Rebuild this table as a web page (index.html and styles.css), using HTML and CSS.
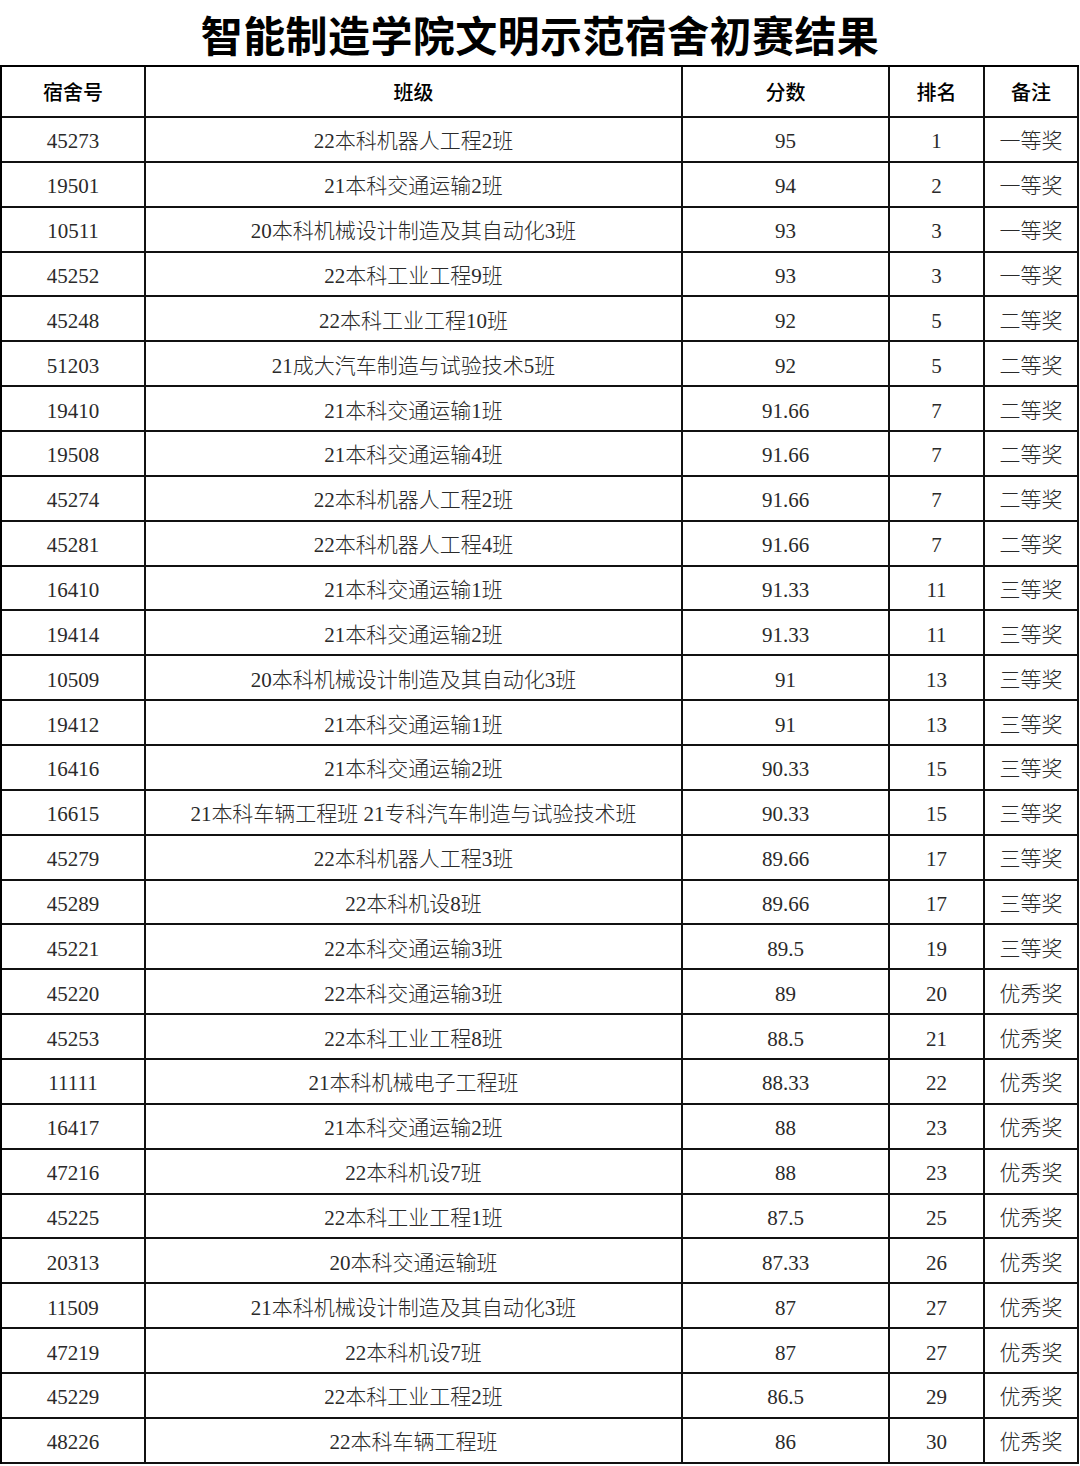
FILE: index.html
```html
<!DOCTYPE html>
<html lang="zh-CN">
<head>
<meta charset="utf-8">
<title>智能制造学院文明示范宿舍初赛结果</title>
<link rel="stylesheet" href="styles.css">
</head>
<body>
<h1 class="title">智能制造学院文明示范宿舍初赛结果</h1>
<div class="grid">
  <div class="cell head">宿舍号</div><div class="cell head">班级</div><div class="cell head">分数</div><div class="cell head">排名</div><div class="cell head">备注</div>
  <div class="cell">45273</div><div class="cell">22本科机器人工程2班</div><div class="cell">95</div><div class="cell">1</div><div class="cell">一等奖</div>
  <div class="cell">19501</div><div class="cell">21本科交通运输2班</div><div class="cell">94</div><div class="cell">2</div><div class="cell">一等奖</div>
  <div class="cell">10511</div><div class="cell">20本科机械设计制造及其自动化3班</div><div class="cell">93</div><div class="cell">3</div><div class="cell">一等奖</div>
  <div class="cell">45252</div><div class="cell">22本科工业工程9班</div><div class="cell">93</div><div class="cell">3</div><div class="cell">一等奖</div>
  <div class="cell">45248</div><div class="cell">22本科工业工程10班</div><div class="cell">92</div><div class="cell">5</div><div class="cell">二等奖</div>
  <div class="cell">51203</div><div class="cell">21成大汽车制造与试验技术5班</div><div class="cell">92</div><div class="cell">5</div><div class="cell">二等奖</div>
  <div class="cell">19410</div><div class="cell">21本科交通运输1班</div><div class="cell">91.66</div><div class="cell">7</div><div class="cell">二等奖</div>
  <div class="cell">19508</div><div class="cell">21本科交通运输4班</div><div class="cell">91.66</div><div class="cell">7</div><div class="cell">二等奖</div>
  <div class="cell">45274</div><div class="cell">22本科机器人工程2班</div><div class="cell">91.66</div><div class="cell">7</div><div class="cell">二等奖</div>
  <div class="cell">45281</div><div class="cell">22本科机器人工程4班</div><div class="cell">91.66</div><div class="cell">7</div><div class="cell">二等奖</div>
  <div class="cell">16410</div><div class="cell">21本科交通运输1班</div><div class="cell">91.33</div><div class="cell">11</div><div class="cell">三等奖</div>
  <div class="cell">19414</div><div class="cell">21本科交通运输2班</div><div class="cell">91.33</div><div class="cell">11</div><div class="cell">三等奖</div>
  <div class="cell">10509</div><div class="cell">20本科机械设计制造及其自动化3班</div><div class="cell">91</div><div class="cell">13</div><div class="cell">三等奖</div>
  <div class="cell">19412</div><div class="cell">21本科交通运输1班</div><div class="cell">91</div><div class="cell">13</div><div class="cell">三等奖</div>
  <div class="cell">16416</div><div class="cell">21本科交通运输2班</div><div class="cell">90.33</div><div class="cell">15</div><div class="cell">三等奖</div>
  <div class="cell">16615</div><div class="cell">21本科车辆工程班 21专科汽车制造与试验技术班</div><div class="cell">90.33</div><div class="cell">15</div><div class="cell">三等奖</div>
  <div class="cell">45279</div><div class="cell">22本科机器人工程3班</div><div class="cell">89.66</div><div class="cell">17</div><div class="cell">三等奖</div>
  <div class="cell">45289</div><div class="cell">22本科机设8班</div><div class="cell">89.66</div><div class="cell">17</div><div class="cell">三等奖</div>
  <div class="cell">45221</div><div class="cell">22本科交通运输3班</div><div class="cell">89.5</div><div class="cell">19</div><div class="cell">三等奖</div>
  <div class="cell">45220</div><div class="cell">22本科交通运输3班</div><div class="cell">89</div><div class="cell">20</div><div class="cell">优秀奖</div>
  <div class="cell">45253</div><div class="cell">22本科工业工程8班</div><div class="cell">88.5</div><div class="cell">21</div><div class="cell">优秀奖</div>
  <div class="cell">11111</div><div class="cell">21本科机械电子工程班</div><div class="cell">88.33</div><div class="cell">22</div><div class="cell">优秀奖</div>
  <div class="cell">16417</div><div class="cell">21本科交通运输2班</div><div class="cell">88</div><div class="cell">23</div><div class="cell">优秀奖</div>
  <div class="cell">47216</div><div class="cell">22本科机设7班</div><div class="cell">88</div><div class="cell">23</div><div class="cell">优秀奖</div>
  <div class="cell">45225</div><div class="cell">22本科工业工程1班</div><div class="cell">87.5</div><div class="cell">25</div><div class="cell">优秀奖</div>
  <div class="cell">20313</div><div class="cell">20本科交通运输班</div><div class="cell">87.33</div><div class="cell">26</div><div class="cell">优秀奖</div>
  <div class="cell">11509</div><div class="cell">21本科机械设计制造及其自动化3班</div><div class="cell">87</div><div class="cell">27</div><div class="cell">优秀奖</div>
  <div class="cell">47219</div><div class="cell">22本科机设7班</div><div class="cell">87</div><div class="cell">27</div><div class="cell">优秀奖</div>
  <div class="cell">45229</div><div class="cell">22本科工业工程2班</div><div class="cell">86.5</div><div class="cell">29</div><div class="cell">优秀奖</div>
  <div class="cell">48226</div><div class="cell">22本科车辆工程班</div><div class="cell">86</div><div class="cell">30</div><div class="cell">优秀奖</div>
</div>
</body>
</html>
```
FILE: styles.css
```css
html, body {
  margin: 0;
  padding: 0;
  background: #fff;
}
body {
  width: 1080px;
  font-family: "Liberation Serif", "Noto Sans CJK SC", serif;
  color: #2a2a2a;
}
.title {
  margin: 0;
  height: 65px;
  padding-top: 2px;
  box-sizing: border-box;
  line-height: 63px;
  text-align: center;
  font-family: "Noto Sans CJK SC", sans-serif;
  font-size: 42px;
  font-weight: 700;
  color: #000;
  letter-spacing: 0.4px;
}
.grid {
  display: grid;
  width: 1079px;
  box-sizing: border-box;
  grid-template-columns: 144px 537px 207px 95px 94px;
  grid-template-rows: 51px repeat(30, 44.87px);
  border-top: 2px solid #000;
  border-left: 2px solid #000;
}
.cell {
  display: flex;
  align-items: center;
  justify-content: center;
  box-sizing: border-box;
  border-right: 2px solid #111;
  border-bottom: 2px solid #111;
  font-size: 21px;
  line-height: 24px;
  font-weight: 300;
  padding-top: 4px;
  white-space: nowrap;
}
.head {
  font-family: "Noto Sans CJK SC", sans-serif;
  font-size: 20px;
  font-weight: 500;
  color: #000;
  padding-top: 1px;
}
```
